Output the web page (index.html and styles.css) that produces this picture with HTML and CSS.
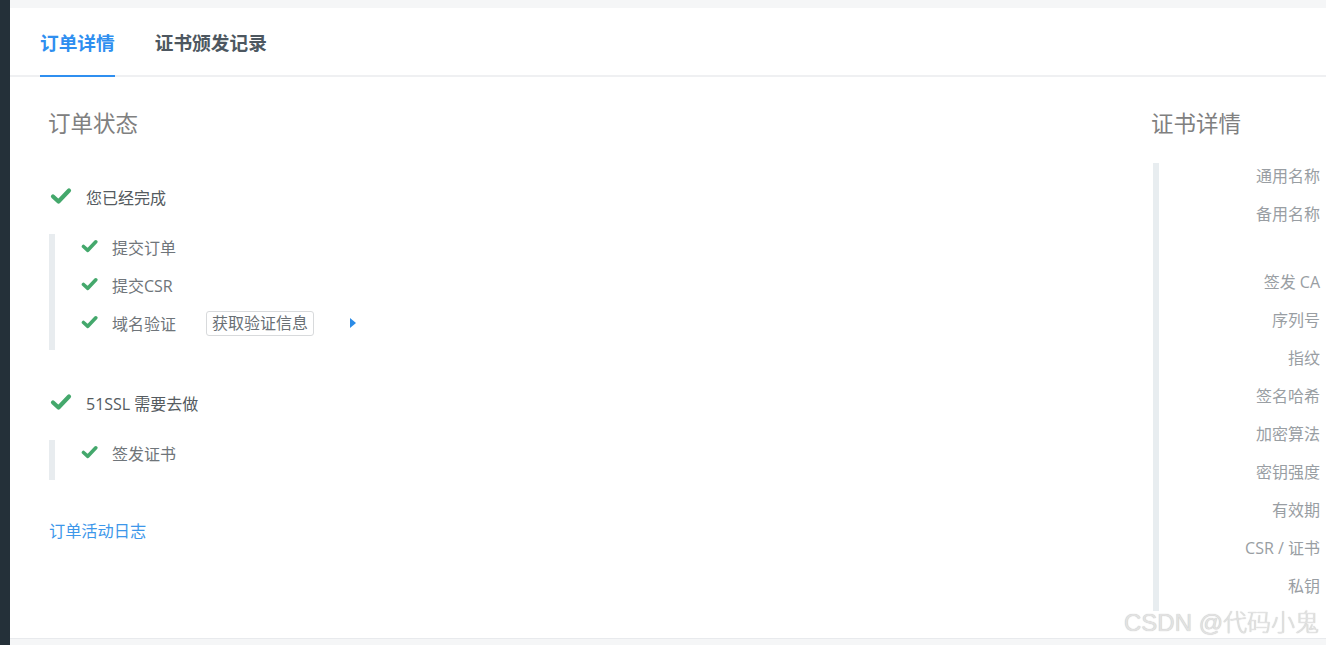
FILE: index.html
```html
<!DOCTYPE html>
<html lang="zh-CN">
<head>
<meta charset="utf-8">
<title>订单详情</title>
<link rel="stylesheet" href="styles.css">
</head>
<body>
<div class="app">
  <aside class="sidebar"></aside>
  <main class="main">
    <section class="card">
      <nav class="tabs">
        <a class="tab active">订单详情</a>
        <a class="tab">证书颁发记录</a>
      </nav>
      <div class="content">
        <div class="status">
          <h2 class="title">订单状态</h2>
          <div class="step">
            <svg class="check big" viewBox="0 0 22 18"><polyline points="3,9.5 8.5,14.5 19,3.5"/></svg>
            <span>您已经完成</span>
          </div>
          <ul class="sub">
            <li class="sub-item">
              <svg class="check" viewBox="0 0 17 14"><polyline points="2.5,7.5 6.8,11.3 14.8,2.8"/></svg>
              <span class="label">提交订单</span>
            </li>
            <li class="sub-item">
              <svg class="check" viewBox="0 0 17 14"><polyline points="2.5,7.5 6.8,11.3 14.8,2.8"/></svg>
              <span class="label">提交CSR</span>
            </li>
            <li class="sub-item">
              <svg class="check" viewBox="0 0 17 14"><polyline points="2.5,7.5 6.8,11.3 14.8,2.8"/></svg>
              <span class="label">域名验证</span>
              <button class="btn">获取验证信息</button>
              <span class="caret"></span>
            </li>
          </ul>
          <div class="step step-2">
            <svg class="check big" viewBox="0 0 22 18"><polyline points="3,9.5 8.5,14.5 19,3.5"/></svg>
            <span>51SSL 需要去做</span>
          </div>
          <ul class="sub">
            <li class="sub-item">
              <svg class="check" viewBox="0 0 17 14"><polyline points="2.5,7.5 6.8,11.3 14.8,2.8"/></svg>
              <span class="label">签发证书</span>
            </li>
          </ul>
          <a class="log-link">订单活动日志</a>
        </div>
        <div class="cert">
          <h2 class="title">证书详情</h2>
          <dl class="cert-list">
            <div class="row"><dt>通用名称</dt><dd></dd></div>
            <div class="row tall"><dt>备用名称</dt><dd></dd></div>
            <div class="row"><dt>签发 CA</dt><dd></dd></div>
            <div class="row"><dt>序列号</dt><dd></dd></div>
            <div class="row"><dt>指纹</dt><dd></dd></div>
            <div class="row"><dt>签名哈希</dt><dd></dd></div>
            <div class="row"><dt>加密算法</dt><dd></dd></div>
            <div class="row"><dt>密钥强度</dt><dd></dd></div>
            <div class="row"><dt>有效期</dt><dd></dd></div>
            <div class="row"><dt>CSR / 证书</dt><dd></dd></div>
            <div class="row"><dt>私钥</dt><dd></dd></div>
          </dl>
        </div>
      </div>
    </section>
  </main>
</div>
<div class="watermark">CSDN @代码小鬼</div>
</body>
</html>
```
FILE: styles.css
```css
* { box-sizing: border-box; }
html, body {
  margin: 0;
  padding: 0;
  height: 645px;
  overflow: hidden;
  background: #f5f6f7;
  font-family: "Open Sans", "Noto Sans CJK SC", sans-serif;
}
.app {
  display: flex;
  height: 645px;
}
.sidebar {
  width: 10px;
  flex: 0 0 10px;
  background: #243039;
}
.main {
  flex: 1;
  min-width: 0;
  padding-top: 8px;
  background: #f5f6f7;
}
.card {
  background: #fff;
  height: 631px;
  border-bottom: 1px solid #e8eaed;
  overflow: hidden;
}
.tabs {
  display: flex;
  gap: 40px;
  padding-left: 30px;
  height: 69px;
  border-bottom: 2px solid #eff0f2;
}
.tab {
  display: block;
  padding-top: 23px;
  height: 69px;
  line-height: 24px;
  font-size: 18.7px;
  font-weight: 700;
  color: #4d5760;
  border-bottom: 2px solid transparent;
  margin-bottom: -2px;
}
.tab.active {
  color: #2f8ff0;
  border-bottom-color: #2f8ff0;
}
.content {
  display: flex;
  padding: 32px 0 0 39px;
}
.status {
  flex: 0 0 1103px;
}
.cert {
  flex: 0 0 420px;
}
.title {
  margin: 0 0 0 -1px;
  font-size: 22.5px;
  font-weight: 400;
  line-height: 30px;
  color: #808080;
}
.step {
  display: flex;
  align-items: center;
  height: 26px;
  margin-top: 45px;
  font-size: 16px;
  color: #555b60;
}
.step-2 { margin-top: 40px; }
.check {
  fill: none;
  stroke: #44a86c;
  stroke-linecap: round;
  stroke-linejoin: round;
}
.check.big {
  width: 22px;
  height: 18px;
  stroke-width: 4.2;
  margin: 0 14px 2px 1px;
}
.sub {
  list-style: none;
  margin: 24px 0 0;
  padding: 0 0 14px 26px;
  border-left: 6px solid #e8ecef;
}
.sub + .step { margin-top: 40px; }
.sub-item {
  display: flex;
  align-items: center;
  height: 26px;
  margin-bottom: 12px;
  font-size: 16px;
  color: #6f757a;
}
.sub-item:last-child { margin-bottom: 0; }
.sub-item .check {
  width: 17px;
  height: 14px;
  stroke-width: 3.6;
  margin: 0 14px 2px 0;
}
.label {
  display: inline-block;
  width: 94px;
}
.btn {
  height: 25px;
  padding: 0 5px;
  line-height: 22px;
  font-family: inherit;
  font-size: 16px;
  color: #6a7075;
  background: #fff;
  border: 1px solid #d8dadc;
  border-radius: 3px;
}
.caret {
  width: 0;
  height: 0;
  margin-left: 36px;
  border-top: 5.5px solid transparent;
  border-bottom: 5.5px solid transparent;
  border-left: 6px solid #2b8be6;
}
.log-link {
  display: block;
  margin-top: 38px;
  line-height: 26px;
  font-size: 16.2px;
  color: #3d97ea;
}
.cert-list {
  margin: 24px 0 0 1px;
  padding: 0 0 12px;
  border-left: 6px solid #e8edf0;
}
.row {
  display: flex;
  height: 26px;
  margin-bottom: 12px;
}
.row:last-child { margin-bottom: 0; }
.row.tall { height: 56px; }
.row dt {
  width: 161px;
  text-align: right;
  line-height: 26px;
  font-size: 16px;
  color: #999ea3;
}
.row dd {
  margin: 0 0 0 20px;
}
.watermark {
  position: absolute;
  left: 1124px;
  top: 607px;
  font-family: "Liberation Sans", "Noto Sans CJK SC", sans-serif;
  font-size: 24px;
  font-weight: 300;
  line-height: 32px;
  color: #e2e2e2;
  text-shadow: 0 0 1px #b8b8b8;
  white-space: nowrap;
}
```
